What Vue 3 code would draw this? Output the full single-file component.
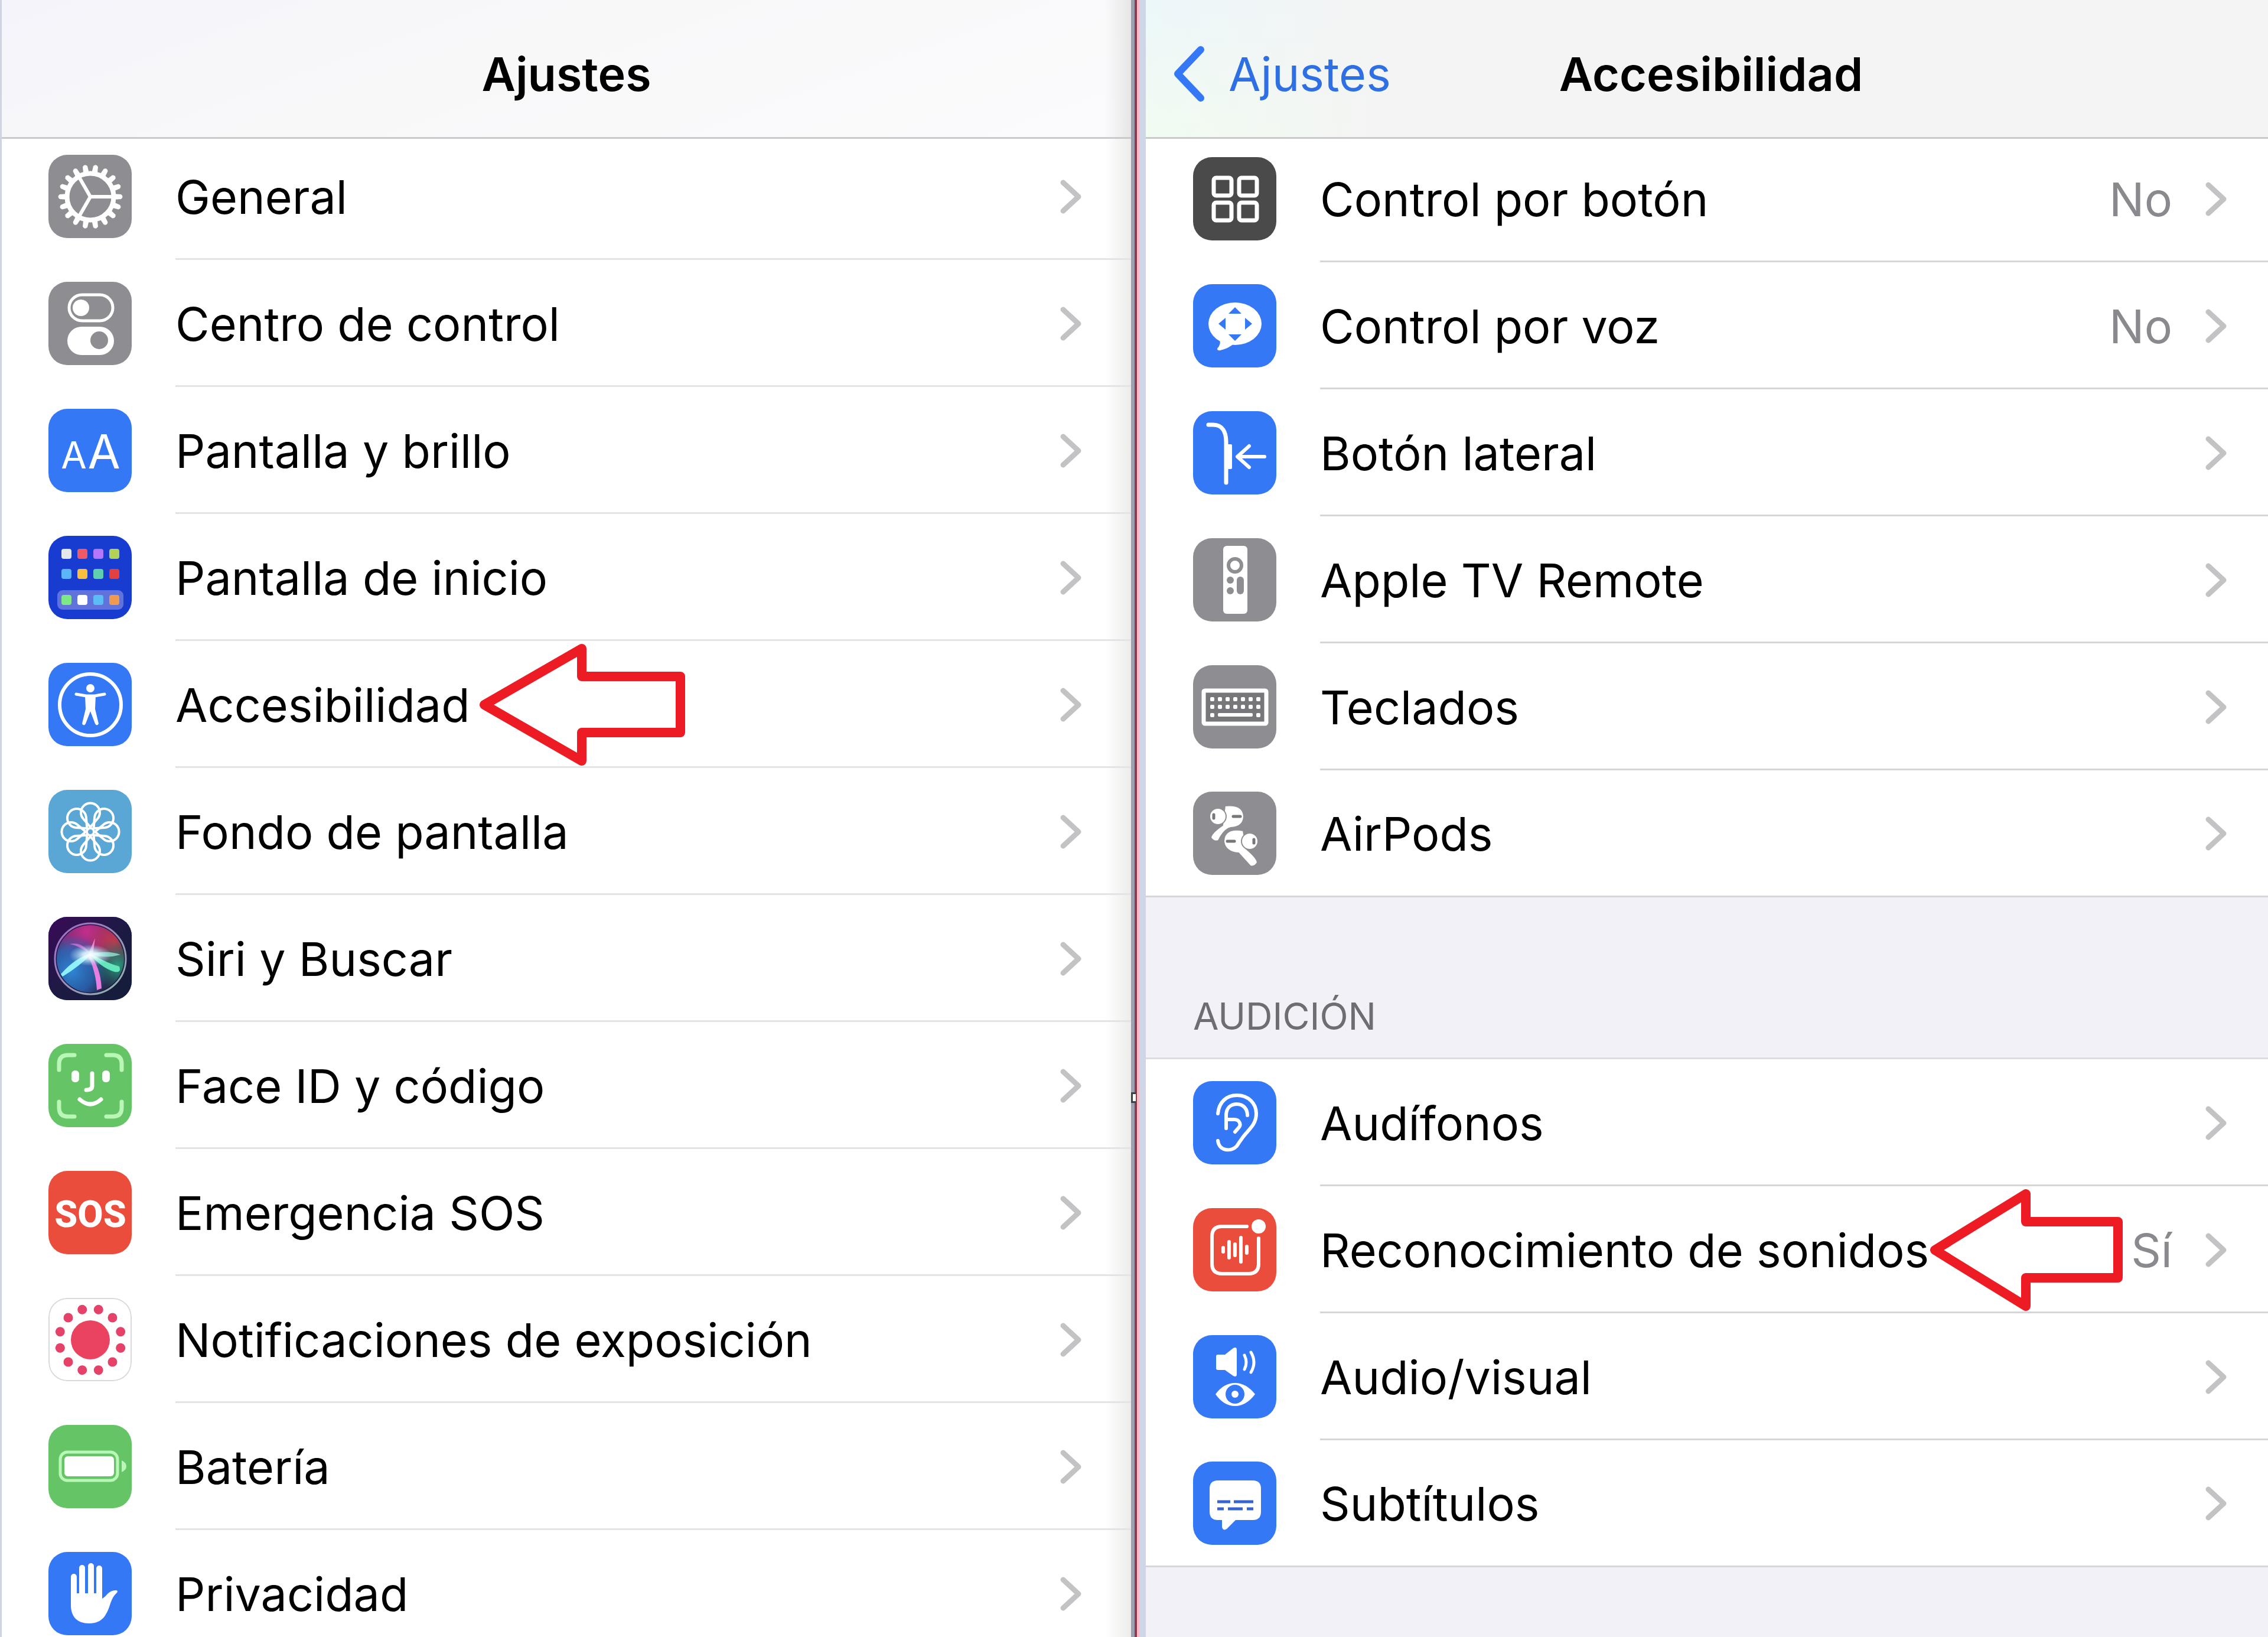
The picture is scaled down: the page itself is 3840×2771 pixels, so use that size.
<script setup>
const teeth = Array.from({ length: 18 }, (_, i) =>
  `<path d="M109 66L123 67Q128 71 123 75L109 76Z" transform="rotate(${i * 20} 71 71)"/>`).join('')
const petals = Array.from({ length: 8 }, (_, i) =>
  `<path d="M0 -8L-12 -22A16 16 0 1 1 12 -22Z" transform="rotate(${i * 45})"/>`).join('')
const dots = Array.from({ length: 12 }, (_, i) =>
  `<circle cx="71" cy="18" r="8" transform="rotate(${15 + i * 30} 71 71)"/>`).join('')
const appColours = ['#e6e6ee', '#ee5a66', '#b277fb', '#b4d255', '#5cb4fa', '#f8c03e', '#5fd0ae', '#e2423f', '#7ee886', '#ffffff', '#5cbdf6', '#ee9a50']
const apps = appColours.map((c, i) =>
  `<rect x="${22 + (i % 4) * 27}" y="${[22, 56, 100][Math.floor(i / 4)]}" width="17" height="17" rx="4" fill="${c}"/>`).join('')
const keys = [57, 70].map(y => [32, 45, 58, 71, 84, 97, 110].map(x =>
  `<rect x="${x - 3}" y="${y - 3}" width="7" height="7" rx="2"/>`).join('')).join('')

const icons = {
  gear: `<g fill="#fff">${teeth}</g><circle cx="71" cy="71" r="39.5" fill="none" stroke="#fff" stroke-width="8"/><path d="M71 71H108M71 71L52 38M71 71L52 104" stroke="#fff" stroke-width="6"/>`,
  toggles: `<rect x="35" y="22" width="74" height="44" rx="22" fill="none" stroke="#fff" stroke-width="5"/><circle cx="55" cy="44" r="14" fill="#fff"/><rect x="32" y="76" width="79" height="48" rx="24" fill="#fff"/><circle cx="86" cy="99" r="15" fill="#8e8d92"/>`,
  letters: `<g fill="#fff" font-family="Inter, sans-serif" font-weight="400" text-anchor="middle"><text x="43" y="101" font-size="63">A</text><text x="94" y="101" font-size="80">A</text></g>`,
  home: `<rect x="15" y="92" width="112" height="33" rx="9" fill="#6073dc"/>${apps}`,
  person: `<circle cx="71" cy="71" r="52" fill="none" stroke="#fff" stroke-width="6"/><circle cx="71" cy="43" r="7" fill="#fff"/><path d="M47 53L64 56H78L95 53" fill="none" stroke="#fff" stroke-width="5" stroke-linecap="round" stroke-linejoin="round"/><path d="M62 55H80L79 78L85 103Q82 108 79 103L71 82L63 103Q60 108 57 103L63 78Z" fill="#fff"/>`,
  flower: `<g transform="translate(71 71)" fill="none" stroke="#fff" stroke-width="4" stroke-linejoin="round">${petals}<circle r="6"/></g>`,
  siri: `<defs>
    <linearGradient id="sb" x1="0" y1="0" x2="1" y2="1"><stop offset="0" stop-color="#3b0a58"/><stop offset=".5" stop-color="#1d1a44"/><stop offset="1" stop-color="#141d38"/></linearGradient>
    <linearGradient id="sr" x1="0" y1="0" x2="1" y2="1"><stop offset="0" stop-color="#a266c8"/><stop offset="1" stop-color="#8fb8ac"/></linearGradient>
    <radialGradient id="sp" cx=".45" cy=".1" r=".6"><stop offset="0" stop-color="#c22f8c"/><stop offset=".6" stop-color="#a02a80" stop-opacity=".8"/><stop offset="1" stop-color="#a02a80" stop-opacity="0"/></radialGradient>
    <radialGradient id="so" cx=".85" cy=".25" r=".4"><stop offset="0" stop-color="#c23a4c"/><stop offset="1" stop-color="#c23a4c" stop-opacity="0"/></radialGradient>
    <radialGradient id="sl" cx=".22" cy=".68" r=".55"><stop offset="0" stop-color="#2f86d4"/><stop offset=".6" stop-color="#2a68b8" stop-opacity=".8"/><stop offset="1" stop-color="#2a62b0" stop-opacity="0"/></radialGradient>
    <radialGradient id="sg" cx=".9" cy=".6" r=".4"><stop offset="0" stop-color="#2b9c7c"/><stop offset="1" stop-color="#1f6a60" stop-opacity="0"/></radialGradient>
    <radialGradient id="sw"><stop offset="0" stop-color="#fff"/><stop offset=".35" stop-color="#e6ffff" stop-opacity=".85"/><stop offset="1" stop-color="#aef" stop-opacity="0"/></radialGradient></defs>
    <rect width="141" height="141" fill="url(#sb)"/><circle cx="71" cy="71" r="57" fill="#26254c"/>
    <circle cx="71" cy="71" r="57" fill="url(#sp)"/><circle cx="71" cy="71" r="57" fill="url(#so)"/><circle cx="71" cy="71" r="57" fill="url(#sl)"/><circle cx="71" cy="71" r="57" fill="url(#sg)"/>
    <path d="M74 62Q52 84 24 101L21 97Q46 68 74 62Z" fill="#8ff0fa"/><path d="M70 62Q50 48 36 46Q58 42 70 62Z" fill="#e27be0" opacity=".7"/>
    <path d="M68 60Q98 78 120 84Q124 95 112 93Q88 86 68 60Z" fill="#62e6ba"/><path d="M70 62Q96 72 122 64Q102 56 70 62Z" fill="#8de8d8" opacity=".8"/>
    <path d="M66 64Q80 90 82 124L90 121Q88 84 70 64Z" fill="#e67fe0"/><path d="M68 62L79 36L75 66Z" fill="#ff9ae0" opacity=".8"/>
    <ellipse cx="71" cy="65" rx="36" ry="18" fill="url(#sw)"/><circle cx="71" cy="71" r="60" fill="none" stroke="url(#sr)" stroke-width="3"/>`,
  face: `<path d="M18 44V34Q18 19 33 19H44M98 19H109Q124 19 124 34V44M18 98V108Q18 123 33 123H44M98 123H109Q124 123 124 108V98" fill="none" stroke="#b9f7b6" stroke-width="7" stroke-linecap="round"/><rect x="39" y="45" width="13" height="20" rx="6" fill="#fff"/><rect x="91" y="45" width="13" height="20" rx="6" fill="#fff"/><path d="M74 50V71Q74 78 64 78M53 94Q71 110 89 94" fill="none" stroke="#fff" stroke-width="7" stroke-linecap="round"/>`,
  sos: `<text x="71" y="95" font-family="Roboto, sans-serif" font-weight="800" font-size="63" text-anchor="middle" fill="#fff">SOS</text>`,
  exposure: `<rect x="1" y="1" width="139" height="139" rx="31" fill="#fff" stroke="#d9d9dc" stroke-width="2"/><circle cx="71" cy="71" r="33" fill="#ea4360"/><g fill="#e44268">${dots}</g>`,
  battery: `<rect x="20" y="46" width="97" height="48" rx="12" fill="none" stroke="#b9f7b6" stroke-width="5"/><rect x="27" y="53" width="84" height="34" rx="6" fill="#fff"/><path d="M124 60Q132 64 132 70Q132 76 124 80Z" fill="#b9f7b6"/>`,
  hand: `<path d="M43 42V84M57 27V84M72 24V84M86 28V84" stroke="#fff" stroke-width="10" stroke-linecap="round"/><path d="M38 70H91V79Q95 77 100 71Q107 64 115 65Q119 66 115 70Q109 75 105 87C99 106 92 121 69 121C49 121 38 110 38 90Z" fill="#fff"/>`,
  grid: `<g fill="none" stroke="#fff" stroke-width="7"><rect x="35" y="35" width="30" height="30" rx="4"/><rect x="78" y="35" width="30" height="30" rx="4"/><rect x="35" y="77" width="30" height="30" rx="4"/><rect x="78" y="77" width="30" height="30" rx="4"/></g>`,
  voice: `<ellipse cx="71" cy="67" rx="45" ry="36" fill="#fff"/><path d="M44 92Q49 100 41 109Q41 113 46 112Q60 109 70 100Z" fill="#fff"/><path d="M71 39L82 50H60ZM71 96L82 85H60ZM43 67L55 57V77ZM100 67L88 57V77Z" fill="#3478f6"/>`,
  side: `<path d="M26 23H34C50 23 56 36 56 52V121" fill="none" stroke="#fff" stroke-width="7" stroke-linecap="round"/><rect x="56" y="56" width="10" height="42" rx="2" fill="#fff"/><path d="M121 77H76M95 59L75 77L95 95" fill="none" stroke="#fff" stroke-width="6" stroke-linecap="round" stroke-linejoin="round"/>`,
  remote: `<rect x="51" y="13" width="41" height="115" rx="6" fill="#fff"/><circle cx="71" cy="46" r="11" fill="none" stroke="#8e8d92" stroke-width="6"/><g fill="#8e8d92"><circle cx="63" cy="71" r="6"/><circle cx="63" cy="89" r="6"/><rect x="74" y="65" width="12" height="30" rx="6"/></g>`,
  keyboard: `<rect x="18" y="43" width="106" height="56" rx="2" fill="#77767b" stroke="#fff" stroke-width="7" stroke-linejoin="round"/><g fill="#fff">${keys}<rect x="29" y="81" width="7" height="7" rx="2"/><rect x="107" y="81" width="7" height="7" rx="2"/><rect x="42" y="81" width="59" height="6" rx="2"/></g>`,
  pods: `<g stroke="#8e8d92" stroke-width="2"><path d="M54 24Q85 21 86 42Q85 60 64 61Q52 64 43 83Q36 86 30 78Q31 70 50 57Z" fill="#fff"/><circle cx="42" cy="42" r="14" fill="#fff"/><path d="M85 66Q53 60 52 84Q54 102 77 104L97 126Q104 128 109 120Q108 112 90 97Z" fill="#fff"/><circle cx="96" cy="84" r="14" fill="#fff"/></g><path d="M68 42H80M58 84H70M35 39V45M103 81V87" stroke="#77767b" stroke-width="5" stroke-linecap="round"/>`,
  ear: `<path d="M42 55C44 35 57 24 74 24C94 24 107 38 107 55C107 70 99 78 90 88C82 97 79 103 74 110C65 120 44 119 42 101M56 80V56C57 45 64 39 74 39C85 39 92 47 92 58M56 65H70C78 65 82 73 78 78L71 86" fill="none" stroke="#fff" stroke-width="6" stroke-linecap="round" stroke-linejoin="round"/>`,
  sound: `<path d="M91 31H49Q32 31 32 48V94Q32 111 49 111H94Q111 111 111 94V51" fill="none" stroke="#fff" stroke-width="6" stroke-linecap="round"/><circle cx="111" cy="31" r="12" fill="#fff"/><path d="M51 67V74M61 57V84M71 61V80M81 50V91M91 65V76" stroke="#fff" stroke-width="6" stroke-linecap="round"/>`,
  av: `<path d="M42 33H54L68 22Q74 19 74 25V66Q74 72 68 69L54 59H42Q39 59 39 56V36Q39 33 42 33Z" fill="#fff"/><path d="M87 34Q93 46 87 58M98 29Q108 46 98 63" fill="none" stroke="#fff" stroke-width="5" stroke-linecap="round"/><path d="M38 100Q52 81 71 81Q90 81 105 100Q90 120 71 120Q52 120 38 100Z" fill="#fff"/><circle cx="71" cy="100" r="16" fill="#3478f6"/><circle cx="71" cy="100" r="6" fill="#fff"/>`,
  subtitles: `<path d="M42 32H101Q115 32 115 46V85Q115 99 101 99H72L57 114Q51 118 49 111V99H42Q28 99 28 85V46Q28 32 42 32Z" fill="#fff"/><path d="M41 68H63M69 68H102M41 80H52M59 80H84M91 80H102" stroke="#3465d0" stroke-width="5"/>`
}

const settings = [
  { label: 'General', icon: 'gear', tint: 'grey' },
  { label: 'Centro de control', icon: 'toggles', tint: 'grey' },
  { label: 'Pantalla y brillo', icon: 'letters', tint: 'blue' },
  { label: 'Pantalla de inicio', icon: 'home', tint: 'navy' },
  { label: 'Accesibilidad', icon: 'person', tint: 'blue', arrow: { width: 350, neck: 175, gap: 'far' } },
  { label: 'Fondo de pantalla', icon: 'flower', tint: 'sky' },
  { label: 'Siri y Buscar', icon: 'siri', tint: 'navy' },
  { label: 'Face ID y código', icon: 'face', tint: 'green' },
  { label: 'Emergencia SOS', icon: 'sos', tint: 'red' },
  { label: 'Notificaciones de exposición', icon: 'exposure', tint: 'white' },
  { label: 'Batería', icon: 'battery', tint: 'green' },
  { label: 'Privacidad', icon: 'hand', tint: 'blue' }
]
const motor = [
  { label: 'Control por botón', icon: 'grid', tint: 'dark', value: 'No' },
  { label: 'Control por voz', icon: 'voice', tint: 'blue', value: 'No' },
  { label: 'Botón lateral', icon: 'side', tint: 'blue' },
  { label: 'Apple TV Remote', icon: 'remote', tint: 'grey' },
  { label: 'Teclados', icon: 'keyboard', tint: 'grey' },
  { label: 'AirPods', icon: 'pods', tint: 'grey' }
]
const hearing = [
  { label: 'Audífonos', icon: 'ear', tint: 'blue' },
  { label: 'Reconocimiento de sonidos', icon: 'sound', tint: 'red', value: 'Sí', arrow: { width: 328, neck: 164, gap: 'near' } },
  { label: 'Audio/visual', icon: 'av', tint: 'blue' },
  { label: 'Subtítulos', icon: 'subtitles', tint: 'blue' }
]
const panels = [
  { id: 'settings', title: 'Ajustes', groups: [{ rows: settings }] },
  { id: 'access', title: 'Accesibilidad', back: 'Ajustes', groups: [{ rows: motor }, { heading: 'AUDICIÓN', rows: hearing }] }
]
const arrowPath = ({ width, neck }) =>
  `M10 104L${neck} 9V56H${width - 8}V151H${neck}V199Z`
</script>

<template>
  <main class="screen">
    <template v-for="panel in panels" :key="panel.id">
      <div v-if="panel.back" class="divider" aria-hidden="true"><span class="handle"></span></div>
      <section class="panel" :class="panel.id">
        <header class="bar">
          <a v-if="panel.back" class="back" href="#">
            <svg class="back-chevron" viewBox="0 0 54 96" aria-hidden="true"><path d="M47 7L8 48L47 89" /></svg>
            <span>{{ panel.back }}</span>
          </a>
          <h1 class="title">{{ panel.title }}</h1>
        </header>
        <div class="content">
          <template v-for="(group, g) in panel.groups" :key="g">
            <h2 v-if="group.heading" class="heading">{{ group.heading }}</h2>
            <ul class="list">
              <li v-for="row in group.rows" :key="row.label">
                <a class="row" href="#">
                  <svg class="icon" :class="row.tint" viewBox="0 0 141 141" aria-hidden="true" v-html="icons[row.icon]"></svg>
                  <span class="body">
                    <span class="label">
                      {{ row.label }}
                      <svg v-if="row.arrow" class="arrow" :class="row.arrow.gap" :width="row.arrow.width" height="208" aria-hidden="true">
                        <path :d="arrowPath(row.arrow)" />
                      </svg>
                    </span>
                    <span v-if="row.value" class="value">{{ row.value }}</span>
                    <svg class="chevron" viewBox="0 0 38 60" aria-hidden="true"><path d="M6 6L32 30L6 54" /></svg>
                  </span>
                </a>
              </li>
            </ul>
          </template>
        </div>
      </section>
    </template>
  </main>
</template>

<style>
body {
  background: #fff;
}
</style>

<style scoped>
.screen {
  display: grid;
  grid-template-columns: 1915fr 25px 1900fr;
  height: 100vh;
  overflow: hidden;
  font: 400 79px/96px Inter, 'Liberation Sans', sans-serif;
  color: #000;
}
.panel {
  display: flex;
  flex-direction: column;
  min-width: 0;
  min-height: 0;
}
.settings {
  border-left: 3px solid #d0d3e0;
  background: linear-gradient(to left, #ececeb, #fff 44px);
}
.access {
  background: #f2f1f7;
}
.divider {
  position: relative;
  background: linear-gradient(to right, #9aa1b0 0 6px, #8c3a50 6px 10px, #f9b9c5 10px 14px, #ced6e7 14px);
}
.handle {
  position: absolute;
  top: 1849px;
  left: 0;
  box-sizing: border-box;
  width: 8px;
  height: 18px;
  border: 3px solid #3c3e48;
  border-right: 0;
  background: #fff;
}
.bar {
  position: relative;
  z-index: 1;
  display: grid;
  grid-template-columns: 1fr auto 1fr;
  align-items: center;
  flex: none;
  box-sizing: border-box;
  height: 235px;
  padding: 17px 32px 0 46px;
  border-bottom: 3px solid #cacacc;
}
.settings .bar {
  padding-right: 46px;
  background:
    linear-gradient(to left, #e6e6e7, transparent 44px),
    linear-gradient(160deg, #f5f4fb, #f8f8f9 40%, #fbfbfd);
}
.access .bar {
  background:
    linear-gradient(to right, transparent, #f4f4f4 400px),
    linear-gradient(#ecf7fa, #f1fcf1);
}
.title {
  grid-column: 2;
  margin: 0;
  font: inherit;
  font-weight: 600;
}
.back {
  display: flex;
  align-items: center;
  gap: 40px;
  color: #2f6fe4;
  text-decoration: none;
}
.back-chevron {
  width: 54px;
  height: 96px;
  fill: none;
  stroke: #3478f6;
  stroke-width: 12;
  stroke-linecap: round;
  stroke-linejoin: round;
}
.content {
  margin-top: -10px;
}
.access .content {
  margin-top: -6px;
}
.list {
  margin: 0;
  padding: 0;
  list-style: none;
}
.access .list {
  border-bottom: 3px solid #d6d6da;
  background: #fff;
}
.row {
  display: flex;
  align-items: center;
  gap: 74px;
  height: 215px;
  padding-left: 79px;
  color: inherit;
  text-decoration: none;
}
.access .row {
  padding-left: 80px;
}
.access li:last-child .row {
  height: 212px;
}
.icon {
  flex: none;
  width: 141px;
  height: 141px;
  border-radius: 32px;
}
.grey { background: #8e8d92; }
.blue { background: #3478f6; }
.navy { background: #183ccf; }
.sky { background: #5aa7d6; }
.green { background: #65c466; }
.red { background: #eb4d3c; }
.dark { background: #4a4a4b; }
.white { background: #fff; }
.body {
  display: flex;
  flex: 1;
  align-items: center;
  gap: 55px;
  box-sizing: border-box;
  height: 100%;
  padding: 4px 83px 0 0;
  border-bottom: 3px solid #e4e4e6;
}
.access .body {
  padding-right: 69px;
  border-bottom-color: #d6d6d8;
}
.access li:last-child .body {
  border-bottom-color: transparent;
}
.label {
  position: relative;
  margin-right: auto;
  white-space: nowrap;
}
.value {
  color: #8a8a8e;
}
.chevron {
  flex: none;
  width: 38px;
  height: 60px;
  fill: none;
  stroke: #c3c3c6;
  stroke-width: 9;
  stroke-linecap: round;
  stroke-linejoin: round;
}
.arrow {
  position: absolute;
  top: -56px;
  left: 100%;
  fill: #fff;
  stroke: #ed1c24;
  stroke-width: 16;
  stroke-linejoin: round;
}
.far {
  margin-left: 14px;
}
.heading {
  margin: 0;
  padding: 163px 80px 32px;
  border-bottom: 3px solid #dcdce2;
  font-size: 63px;
  font-weight: 400;
  line-height: 76px;
  color: #6d6d72;
}
</style>
